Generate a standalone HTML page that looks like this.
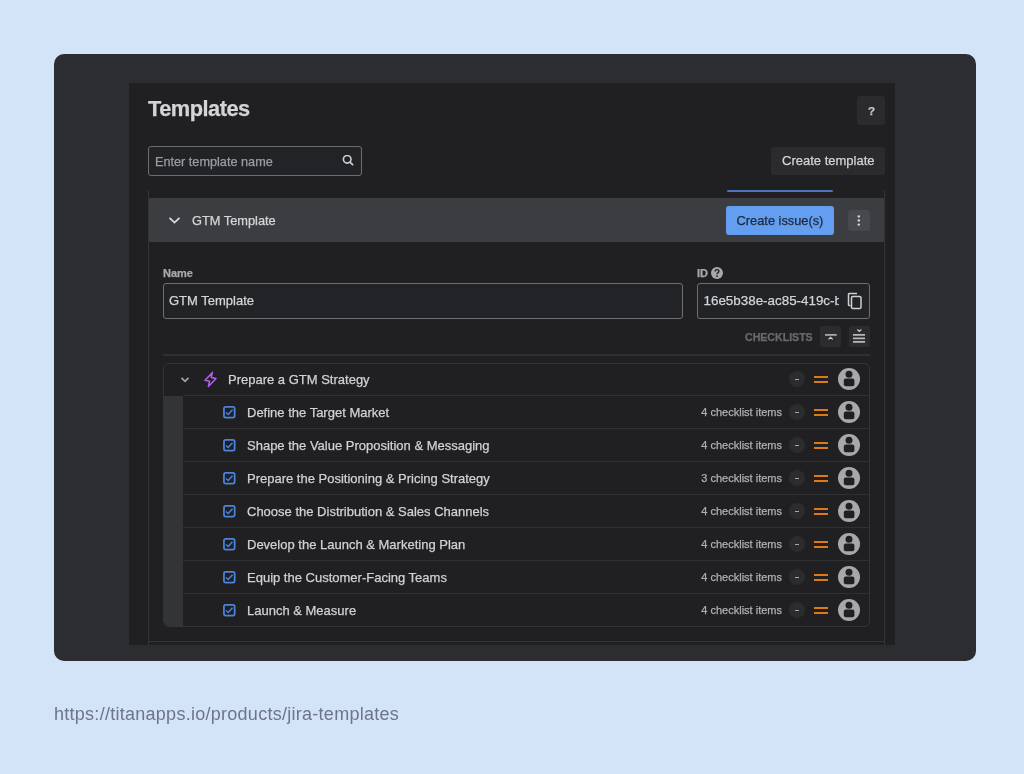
<!DOCTYPE html>
<html><head><meta charset="utf-8">
<style>
*{margin:0;padding:0;box-sizing:border-box}
html,body{width:1024px;height:774px;overflow:hidden;background:#d3e3f8;font-family:"Liberation Sans",sans-serif}
.a{position:absolute}
.t{position:absolute;white-space:nowrap;line-height:16px;-webkit-text-stroke:0.25px currentColor}
#card{left:54px;top:54px;width:922px;height:607px;border-radius:10px;background:#2c2d31}
#panel{left:129px;top:83px;width:766px;height:562px;background:#202022}
.btn{background:#2b2b2e;border-radius:3px}
.inp{border:1px solid #6d6d70;border-radius:3px;background:#222327}
.row{position:absolute;left:183px;width:686px;height:33px;border-top:1px solid #2f3033}
.rt{font-size:13px;color:#d2d2d4}
.cnt{font-size:11px;color:#b0b0b2}
.dash{width:16px;height:16px;border-radius:50%;background:#2b2c2f}
</style></head><body><div id="root" style="position:absolute;left:0;top:0;width:1024px;height:774px;will-change:transform">
<div id="card" class="a"></div>
<div id="panel" class="a"></div>

<!-- title -->
<div class="t" style="left:148px;top:97.4px;font-size:21.8px;line-height:24px;letter-spacing:-0.5px;font-weight:bold;color:#d4d4d6">Templates</div>
<div class="a btn" style="left:857px;top:96px;width:28px;height:29px"></div>
<div class="t" style="left:857.5px;top:103px;width:28px;text-align:center;font-size:11.6px;font-weight:bold;color:#c8c8ca">?</div>

<!-- search -->
<div class="a inp" style="left:148px;top:146px;width:214px;height:30px"></div>
<div class="t" style="left:155px;top:154px;font-size:12.7px;color:#9d9da0">Enter template name</div>
<svg class="a" style="left:342px;top:155px" width="12" height="11" viewBox="0 0 12 11"><circle cx="5.2" cy="4.3" r="3.8" fill="none" stroke="#cfcfd1" stroke-width="1.6"/><path d="M8 7.2 L10.6 9.6" stroke="#d0d0d2" stroke-width="1.7" stroke-linecap="round"/></svg>

<div class="a btn" style="left:771px;top:147px;width:114px;height:28px"></div>
<div class="t" style="left:782px;top:153px;font-size:13px;color:#d4d4d6">Create template</div>

<!-- list frame -->
<div class="a" style="left:148px;top:190px;width:1px;height:455px;background:#333437"></div>
<div class="a" style="left:884px;top:190px;width:1px;height:455px;background:#333437"></div>
<div class="a" style="left:727px;top:190.1px;width:106.3px;height:1.7px;border-radius:1px;background:#4d74bd"></div>
<div class="a" style="left:149px;top:641px;width:735px;height:1px;background:#333437"></div>

<!-- header -->
<div class="a" style="left:149px;top:198px;width:735px;height:44px;background:#3c3d41"></div>
<svg class="a" style="left:168px;top:216px" width="13" height="9" viewBox="0 0 13 9"><path d="M1.5 1.8 L6.5 6.6 L11.5 1.8" fill="none" stroke="#d8d8da" stroke-width="1.8"/></svg>
<div class="t" style="left:192px;top:213px;font-size:12.8px;color:#d6d6d8">GTM Template</div>
<div class="a" style="left:726px;top:206px;width:108px;height:29px;background:#649ef0;border-radius:3px"></div>
<div class="t" style="left:726px;top:213px;width:108px;text-align:center;font-size:12.8px;color:#1d2838">Create issue(s)</div>
<div class="a" style="left:848px;top:210px;width:22px;height:21px;background:#48494d;border-radius:3px"></div>
<svg class="a" style="left:848px;top:210px" width="22" height="21" viewBox="0 0 22 21"><circle cx="10.8" cy="6.4" r="1.2" fill="#dcdcde"/><circle cx="10.8" cy="10.4" r="1.2" fill="#dcdcde"/><circle cx="10.8" cy="14.6" r="1.2" fill="#dcdcde"/></svg>

<!-- name / id -->
<div class="t" style="left:163px;top:265px;font-size:11px;font-weight:bold;color:#a9a9ab">Name</div>
<div class="a inp" style="left:163px;top:283px;width:520px;height:36px;border-color:#6f6f72"></div>
<div class="t" style="left:169px;top:293px;font-size:13px;color:#d5d5d7">GTM Template</div>
<div class="t" style="left:697px;top:265px;font-size:11px;font-weight:bold;color:#a9a9ab">ID</div>
<svg class="a" style="left:711px;top:267px" width="12" height="12" viewBox="0 0 12 12"><circle cx="6" cy="6" r="6" fill="#a8a8aa"/><path d="M4.1 4.6 Q4.1 2.6 6 2.6 Q7.9 2.6 7.9 4.3 Q7.9 5.4 6.8 5.9 Q6 6.3 6 7.3" fill="none" stroke="#202022" stroke-width="1.4"/><circle cx="6" cy="9.2" r="0.85" fill="#202022"/></svg>
<div class="a inp" style="left:697px;top:283px;width:173px;height:36px;border-color:#6f6f72"></div>
<div class="a" style="left:703px;top:292px;width:135.5px;height:18px;overflow:hidden"><div class="t" style="left:0.5px;top:1px;font-size:13.4px;color:#d5d5d7">16e5b38e-ac85-419c-b0e4</div></div>
<svg class="a" style="left:847px;top:292px" width="16" height="18" viewBox="0 0 16 18"><path d="M3.5 13.5 L2.2 13.5 Q1.5 13.5 1.5 12.8 L1.5 2.2 Q1.5 1.5 2.2 1.5 L10 1.5" fill="none" stroke="#d0d0d2" stroke-width="1.5"/><rect x="4.5" y="4.5" width="9.5" height="12" rx="1.3" fill="none" stroke="#d0d0d2" stroke-width="1.5"/></svg>
<div class="t" style="left:745px;top:329px;font-size:10.6px;font-weight:bold;color:#6a6a6d">CHECKLISTS</div>
<div class="a" style="left:820px;top:326px;width:21px;height:21px;background:#2c2c2f;border-radius:3px"></div>
<svg class="a" style="left:820px;top:326px" width="21" height="21" viewBox="0 0 21 21"><path d="M5 8.9 H16.7" stroke="#b8b8ba" stroke-width="1.6"/><path d="M8.5 13.4 L10.6 11.4 L12.7 13.4" fill="none" stroke="#c8c8ca" stroke-width="1.3"/></svg>
<div class="a" style="left:849px;top:326px;width:21px;height:21px;background:#2c2c2f;border-radius:3px"></div>
<svg class="a" style="left:849px;top:326px" width="21" height="21" viewBox="0 0 21 21"><path d="M8.3 3.6 L10.3 5.4 L12.3 3.6" fill="none" stroke="#c8c8ca" stroke-width="1.3"/><path d="M4 8.9 H16 M4 12.4 H16 M4 15.9 H16" stroke="#b8b8ba" stroke-width="1.6"/></svg>
<div class="a" style="left:163px;top:354.2px;width:707px;height:1.4px;background:#2f3033"></div>

<!-- checklist container -->
<div class="a" style="left:163px;top:363px;width:707px;height:264px;border:1px solid #333437;border-radius:6px;overflow:hidden">
  <div class="a" style="left:0;top:32px;width:19px;height:232px;background:#333438"></div>
</div>
<svg class="a" style="left:180px;top:376px" width="10" height="8" viewBox="0 0 10 8"><path d="M1.5 1.8 L5 5.3 L8.5 1.8" fill="none" stroke="#9aa3b5" stroke-width="1.8"/></svg>
<svg class="a" style="left:203px;top:371px" width="15" height="17" viewBox="0 0 15 17"><path d="M9.5 1.4 L8.2 6.4 L13 7.4 L5.4 15.4 L6.6 10.2 L2 9.3 Z" fill="none" stroke="#b35ef0" stroke-width="1.5" stroke-linejoin="round"/></svg>
<div class="t rt" style="left:228px;top:371.5px">Prepare a GTM Strategy</div>
<div class="a dash" style="left:789px;top:371px"></div><div class="a" style="left:795px;top:378.5px;width:4px;height:1.2px;background:#a8a8aa"></div>
<div class="a" style="left:814px;top:375.5px;width:14px;height:2px;background:#dc7a16"></div><div class="a" style="left:814px;top:380.5px;width:14px;height:2px;background:#dc7a16"></div>
<svg class="a" style="left:838px;top:368px" width="22" height="22" viewBox="0 0 22 22"><circle cx="11" cy="11" r="11" fill="#a7a8ac"/><circle cx="11" cy="6.2" r="3.5" fill="#202022"/><rect x="5.8" y="10.6" width="10.6" height="7.6" rx="2" fill="#202022"/></svg>
<div class="row" style="top:395px"></div>
<svg class="a" style="left:222px;top:405px" width="15" height="15" viewBox="0 0 15 15"><rect x="1.95" y="1.95" width="10.7" height="10.7" rx="1.8" fill="none" stroke="#4b84dc" stroke-width="1.75"/><path d="M4 7.5 L6.2 9.5 L10.5 4.8" fill="none" stroke="#4b84dc" stroke-width="1.45"/></svg>
<div class="t rt" style="left:247px;top:404.5px">Define the Target Market</div>
<div class="t cnt" style="right:242px;top:404px">4 checklist items</div>
<div class="a dash" style="left:789px;top:404px"></div><div class="a" style="left:795px;top:411.5px;width:4px;height:1.2px;background:#a8a8aa"></div>
<div class="a" style="left:814px;top:408.5px;width:14px;height:2px;background:#dc7a16"></div><div class="a" style="left:814px;top:413.5px;width:14px;height:2px;background:#dc7a16"></div>
<svg class="a" style="left:838px;top:401px" width="22" height="22" viewBox="0 0 22 22"><circle cx="11" cy="11" r="11" fill="#a7a8ac"/><circle cx="11" cy="6.2" r="3.5" fill="#202022"/><rect x="5.8" y="10.6" width="10.6" height="7.6" rx="2" fill="#202022"/></svg>
<div class="row" style="top:428px"></div>
<svg class="a" style="left:222px;top:438px" width="15" height="15" viewBox="0 0 15 15"><rect x="1.95" y="1.95" width="10.7" height="10.7" rx="1.8" fill="none" stroke="#4b84dc" stroke-width="1.75"/><path d="M4 7.5 L6.2 9.5 L10.5 4.8" fill="none" stroke="#4b84dc" stroke-width="1.45"/></svg>
<div class="t rt" style="left:247px;top:437.5px">Shape the Value Proposition &amp; Messaging</div>
<div class="t cnt" style="right:242px;top:437px">4 checklist items</div>
<div class="a dash" style="left:789px;top:437px"></div><div class="a" style="left:795px;top:444.5px;width:4px;height:1.2px;background:#a8a8aa"></div>
<div class="a" style="left:814px;top:441.5px;width:14px;height:2px;background:#dc7a16"></div><div class="a" style="left:814px;top:446.5px;width:14px;height:2px;background:#dc7a16"></div>
<svg class="a" style="left:838px;top:434px" width="22" height="22" viewBox="0 0 22 22"><circle cx="11" cy="11" r="11" fill="#a7a8ac"/><circle cx="11" cy="6.2" r="3.5" fill="#202022"/><rect x="5.8" y="10.6" width="10.6" height="7.6" rx="2" fill="#202022"/></svg>
<div class="row" style="top:461px"></div>
<svg class="a" style="left:222px;top:471px" width="15" height="15" viewBox="0 0 15 15"><rect x="1.95" y="1.95" width="10.7" height="10.7" rx="1.8" fill="none" stroke="#4b84dc" stroke-width="1.75"/><path d="M4 7.5 L6.2 9.5 L10.5 4.8" fill="none" stroke="#4b84dc" stroke-width="1.45"/></svg>
<div class="t rt" style="left:247px;top:470.5px">Prepare the Positioning &amp; Pricing Strategy</div>
<div class="t cnt" style="right:242px;top:470px">3 checklist items</div>
<div class="a dash" style="left:789px;top:470px"></div><div class="a" style="left:795px;top:477.5px;width:4px;height:1.2px;background:#a8a8aa"></div>
<div class="a" style="left:814px;top:474.5px;width:14px;height:2px;background:#dc7a16"></div><div class="a" style="left:814px;top:479.5px;width:14px;height:2px;background:#dc7a16"></div>
<svg class="a" style="left:838px;top:467px" width="22" height="22" viewBox="0 0 22 22"><circle cx="11" cy="11" r="11" fill="#a7a8ac"/><circle cx="11" cy="6.2" r="3.5" fill="#202022"/><rect x="5.8" y="10.6" width="10.6" height="7.6" rx="2" fill="#202022"/></svg>
<div class="row" style="top:494px"></div>
<svg class="a" style="left:222px;top:504px" width="15" height="15" viewBox="0 0 15 15"><rect x="1.95" y="1.95" width="10.7" height="10.7" rx="1.8" fill="none" stroke="#4b84dc" stroke-width="1.75"/><path d="M4 7.5 L6.2 9.5 L10.5 4.8" fill="none" stroke="#4b84dc" stroke-width="1.45"/></svg>
<div class="t rt" style="left:247px;top:503.5px">Choose the Distribution &amp; Sales Channels</div>
<div class="t cnt" style="right:242px;top:503px">4 checklist items</div>
<div class="a dash" style="left:789px;top:503px"></div><div class="a" style="left:795px;top:510.5px;width:4px;height:1.2px;background:#a8a8aa"></div>
<div class="a" style="left:814px;top:507.5px;width:14px;height:2px;background:#dc7a16"></div><div class="a" style="left:814px;top:512.5px;width:14px;height:2px;background:#dc7a16"></div>
<svg class="a" style="left:838px;top:500px" width="22" height="22" viewBox="0 0 22 22"><circle cx="11" cy="11" r="11" fill="#a7a8ac"/><circle cx="11" cy="6.2" r="3.5" fill="#202022"/><rect x="5.8" y="10.6" width="10.6" height="7.6" rx="2" fill="#202022"/></svg>
<div class="row" style="top:527px"></div>
<svg class="a" style="left:222px;top:537px" width="15" height="15" viewBox="0 0 15 15"><rect x="1.95" y="1.95" width="10.7" height="10.7" rx="1.8" fill="none" stroke="#4b84dc" stroke-width="1.75"/><path d="M4 7.5 L6.2 9.5 L10.5 4.8" fill="none" stroke="#4b84dc" stroke-width="1.45"/></svg>
<div class="t rt" style="left:247px;top:536.5px">Develop the Launch &amp; Marketing Plan</div>
<div class="t cnt" style="right:242px;top:536px">4 checklist items</div>
<div class="a dash" style="left:789px;top:536px"></div><div class="a" style="left:795px;top:543.5px;width:4px;height:1.2px;background:#a8a8aa"></div>
<div class="a" style="left:814px;top:540.5px;width:14px;height:2px;background:#dc7a16"></div><div class="a" style="left:814px;top:545.5px;width:14px;height:2px;background:#dc7a16"></div>
<svg class="a" style="left:838px;top:533px" width="22" height="22" viewBox="0 0 22 22"><circle cx="11" cy="11" r="11" fill="#a7a8ac"/><circle cx="11" cy="6.2" r="3.5" fill="#202022"/><rect x="5.8" y="10.6" width="10.6" height="7.6" rx="2" fill="#202022"/></svg>
<div class="row" style="top:560px"></div>
<svg class="a" style="left:222px;top:570px" width="15" height="15" viewBox="0 0 15 15"><rect x="1.95" y="1.95" width="10.7" height="10.7" rx="1.8" fill="none" stroke="#4b84dc" stroke-width="1.75"/><path d="M4 7.5 L6.2 9.5 L10.5 4.8" fill="none" stroke="#4b84dc" stroke-width="1.45"/></svg>
<div class="t rt" style="left:247px;top:569.5px">Equip the Customer-Facing Teams</div>
<div class="t cnt" style="right:242px;top:569px">4 checklist items</div>
<div class="a dash" style="left:789px;top:569px"></div><div class="a" style="left:795px;top:576.5px;width:4px;height:1.2px;background:#a8a8aa"></div>
<div class="a" style="left:814px;top:573.5px;width:14px;height:2px;background:#dc7a16"></div><div class="a" style="left:814px;top:578.5px;width:14px;height:2px;background:#dc7a16"></div>
<svg class="a" style="left:838px;top:566px" width="22" height="22" viewBox="0 0 22 22"><circle cx="11" cy="11" r="11" fill="#a7a8ac"/><circle cx="11" cy="6.2" r="3.5" fill="#202022"/><rect x="5.8" y="10.6" width="10.6" height="7.6" rx="2" fill="#202022"/></svg>
<div class="row" style="top:593px"></div>
<svg class="a" style="left:222px;top:603px" width="15" height="15" viewBox="0 0 15 15"><rect x="1.95" y="1.95" width="10.7" height="10.7" rx="1.8" fill="none" stroke="#4b84dc" stroke-width="1.75"/><path d="M4 7.5 L6.2 9.5 L10.5 4.8" fill="none" stroke="#4b84dc" stroke-width="1.45"/></svg>
<div class="t rt" style="left:247px;top:602.5px">Launch &amp; Measure</div>
<div class="t cnt" style="right:242px;top:602px">4 checklist items</div>
<div class="a dash" style="left:789px;top:602px"></div><div class="a" style="left:795px;top:609.5px;width:4px;height:1.2px;background:#a8a8aa"></div>
<div class="a" style="left:814px;top:606.5px;width:14px;height:2px;background:#dc7a16"></div><div class="a" style="left:814px;top:611.5px;width:14px;height:2px;background:#dc7a16"></div>
<svg class="a" style="left:838px;top:599px" width="22" height="22" viewBox="0 0 22 22"><circle cx="11" cy="11" r="11" fill="#a7a8ac"/><circle cx="11" cy="6.2" r="3.5" fill="#202022"/><rect x="5.8" y="10.6" width="10.6" height="7.6" rx="2" fill="#202022"/></svg>

<!-- url -->
<div class="t" style="left:54px;top:703px;font-size:18px;line-height:22px;letter-spacing:0.27px;-webkit-text-stroke:0;color:#6e7587">https://titanapps.io/products/jira-templates</div>
</div></body></html>
